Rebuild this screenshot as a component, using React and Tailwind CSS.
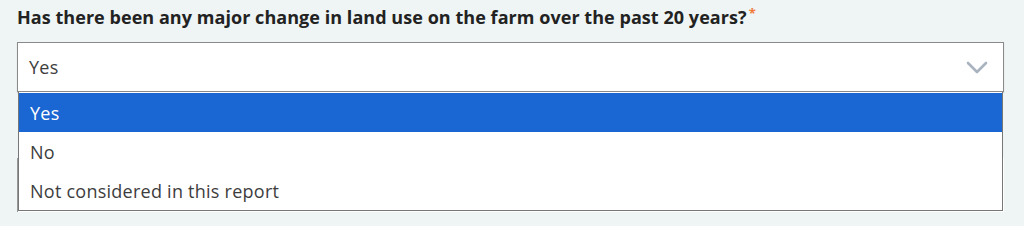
import { useState } from "react";

const options = ["Yes", "No", "Not considered in this report"];

export default function App() {
    const [value, setValue] = useState("Yes");

    return (
        <div className="min-h-[226px] bg-[#eef5f4] px-[17px] pt-[6px] font-['Open_Sans',sans-serif]">
            <label className="block text-[18px] font-bold leading-[23px] tracking-[0.05px] text-[#222]">
                Has there been any major change in land use on the farm over the past 20 years?
                <sup className="relative -top-[6px] ml-[2px] text-[13px] text-[#f07a3c]">*</sup>
            </label>

            <div className="relative mt-[13px] w-[987px]">
                <button type="button" className="flex h-[50px] w-full items-center justify-between border border-[#8a8a8a] bg-white pl-[11px] pr-[15px] text-left text-[18px] tracking-[0.25px] text-[#3d3d3d] shadow-[0_1px_1px_rgba(0,0,0,0.15)]">
                    <span>{value}</span>
                    <svg width="22" height="13" viewBox="0 0 22 13" fill="none" stroke="#a9b3bf" strokeWidth="2.6" strokeLinecap="round" strokeLinejoin="round">
                        <path d="M2 2l9 9 9-9" />
                    </svg>
                </button>

                <ul className="absolute left-[1px] right-[1px] top-[50px] z-10 border border-[#777] border-t-0 bg-white pt-[1px] text-[18px] tracking-[0.25px] text-[#3d3d3d]">
                    {options.map((opt) => (
                        <li key={opt} onClick={() => setValue(opt)} className={"flex h-[39px] cursor-pointer items-center px-[11px] pt-[2px] " + (opt === value ? "bg-[#1a66d2] text-white" : "")}>
                            {opt}
                        </li>
                    ))}
                </ul>

                <div className="mt-[66px] h-[54px] border-l border-[#999] bg-white"></div>
            </div>
        </div>
    );
}
